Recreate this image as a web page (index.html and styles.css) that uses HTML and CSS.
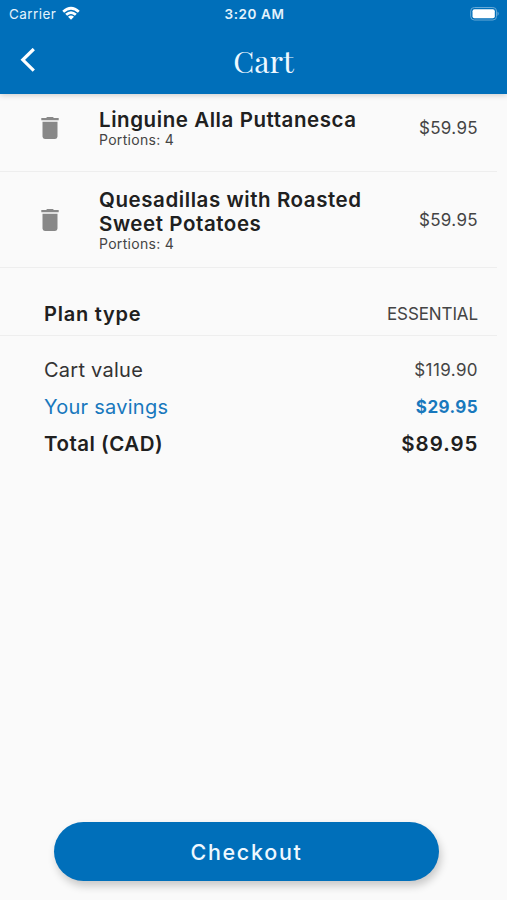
FILE: index.html
```html
<!DOCTYPE html>
<html lang="en">
<head>
<meta charset="utf-8">
<title>Cart</title>
<link rel="stylesheet" href="styles.css">
</head>
<body>
<div class="screen">
  <header class="header">
    <div class="status">
      <div class="carrier"><span class="carrier-name">Carrier</span>
        <svg class="wifi" viewBox="0 0 18 14"><path d="M0.3 4.8 Q9 -3.2 17.7 4.8 L15.9 6.7 Q9 .6 2.1 6.7Z M3.2 7.8 Q9 2.7 14.8 7.8 L12.9 9.7 Q9 6.5 5.1 9.7Z M6 10.8 Q9 8.4 12 10.8 L9 13.8Z"/></svg>
      </div>
      <div class="time"><span>3:20 AM</span></div>
      <div class="battery-wrap">
        <svg class="battery" viewBox="0 0 30 14"><rect class="shell" x=".7" y=".5" width="25.800" height="12.5" rx="3.6"/><rect class="charge" x="2.500" y="2.300" width="22.300" height="9" rx="2"/><path class="nub" d="M27.500 4.6Q30 6.7 27.500 8.9Z"/></svg>
      </div>
    </div>
    <div class="navbar">
      <svg class="back" viewBox="0 0 16 24"><path d="M13.800 1 2.800 11.800l11 10.800"/></svg>
      <h1 class="title"><span>Cart</span></h1>
    </div>
  </header>
  <main class="content">
    <section class="item first">
      <svg class="trash" viewBox="0 0 18 22"><path d="M1.500 4.800h15v14.800q0 2.400-2.400 2.400H3.900q-2.400 0-2.400-2.400ZM.3 1.100h4.700L6.200 0h5.600L13 1.100h4.700v2.200H.3Z"/></svg>
      <div class="info"><h2 class="name"><span>Linguine Alla Puttanesca</span></h2><p class="portions"><span>Portions: 4</span></p></div>
      <div class="price"><span>$59.95</span></div>
    </section>
    <section class="item second">
      <svg class="trash" viewBox="0 0 18 22"><path d="M1.500 4.800h15v14.800q0 2.400-2.400 2.400H3.900q-2.400 0-2.400-2.400ZM.3 1.100h4.700L6.200 0h5.600L13 1.100h4.700v2.200H.3Z"/></svg>
      <div class="info"><h2 class="name"><span>Quesadillas with Roasted</span><br><span>Sweet Potatoes</span></h2><p class="portions"><span>Portions: 4</span></p></div>
      <div class="price"><span>$59.95</span></div>
    </section>
    <section class="plan"><strong>Plan type</strong><span class="plan-name">ESSENTIAL</span></section>
    <section class="summary">
      <div class="row"><span class="value-label">Cart value</span><span class="value">$119.90</span></div>
      <div class="row savings"><span class="savings-label">Your savings</span><span class="savings-value">$29.95</span></div>
      <div class="row total"><span class="total-label">Total (CAD)</span><span class="total-value">$89.95</span></div>
    </section>
  </main>
  <footer class="footer"><button class="checkout">Checkout</button></footer>
</div>
</body>
</html>
```
FILE: styles.css
```css
* { box-sizing: border-box; }
body { margin: 0; font-family: Inter, sans-serif; color: #202020; background: #fafafa; }
h1, h2, p { margin: 0; }
.screen { height: 900px; display: flex; flex-direction: column; overflow: hidden; }
.header { height: 94px; background: #006fba; color: #fff; box-shadow: 0 1px 6px #0003; }
.status { height: 28px; display: grid; grid-template-columns: 1fr 1fr 1fr; align-items: center; padding: 0 7px 0 9px; }
.carrier { display: flex; align-items: center; gap: 6px; font-size: 13.5px; letter-spacing: .45px; color: #e4f3fc; }
.wifi { width: 18px; height: 14px; fill: #fff; margin-top: -2px; }
.time { text-align: center; font-size: 13.5px; font-weight: 600; letter-spacing: .6px; color: #e4f3fc; }
.battery-wrap { display: flex; justify-content: flex-end; }
.battery { width: 30px; height: 14px; margin-top: -1px; }
.shell { fill: none; stroke: #66a9d6; }
.charge { fill: #fff; }
.nub { fill: #66a9d6; }
.navbar { height: 64px; display: flex; align-items: center; padding: 0 16px 0 20px; }
.back { width: 16px; height: 24px; fill: none; stroke: #fff; stroke-width: 3.2; }
.title { flex: 1; text-align: center; font: 400 30.5px/40px "Playfair Display", "Liberation Serif", serif; padding-top: 1px; color: #eef8ff; }
.content { flex: 1; }
.item { width: 497px; display: grid; grid-template-columns: 58px 1fr auto; align-items: center; padding: 0 19px 0 41px; border-bottom: 1px solid #eee; }
.first { height: 78px; padding-bottom: 9px; }
.second { height: 96px; }
.trash { width: 18px; height: 22px; fill: #888; }
.name { font-size: 20.5px; line-height: 24.500px; font-weight: 630; letter-spacing: .57px; }
.portions { font-size: 14px; line-height: 15px; letter-spacing: .3px; color: #444; margin-top: -1px; padding-bottom: 1px; }
.price { font-size: 17px; letter-spacing: .35px; color: #444; }
.plan { width: 497px; height: 68px; display: flex; justify-content: space-between; align-items: center; padding: 25px 19px 0 44px; border-bottom: 1px solid #eee; }
.plan strong { font-size: 20px; font-weight: 630; letter-spacing: .77px; }
.plan-name { font-size: 17px; letter-spacing: -.1px; color: #444; }
.summary { padding: 16px 29px 0 44px; }
.row { height: 36.500px; display: flex; justify-content: space-between; align-items: center; font-size: 20px; letter-spacing: .25px; color: #333; }
.value { font-size: 17px; letter-spacing: .4px; color: #444; }
.row.savings { color: #1878bd; }
.savings-value { font-size: 17px; font-weight: 700; letter-spacing: .4px; }
.row.total { font-weight: 630; color: #202020; }
.total-label { font-size: 20.5px; letter-spacing: .5px; }
.total-value { font-size: 20.5px; letter-spacing: 1px; margin-right: -.5px; }
.footer { height: 78px; padding: 0 68px 0 54px; }
.checkout { width: 385px; height: 59px; border: 0; border-radius: 30px; background: #006fba; color: #eef8ff; font: 500 21.5px Inter, sans-serif; letter-spacing: 1.7px; box-shadow: 2px 5px 8px #0003; }
```
